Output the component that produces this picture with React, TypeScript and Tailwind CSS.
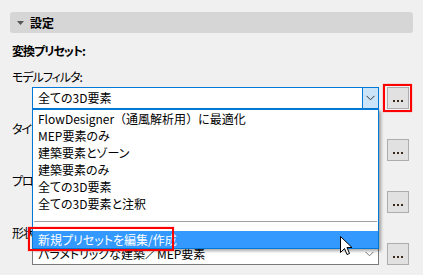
import React from "react";

function Chevron({ color }: { color: string }) {
  return (
    <svg width="9" height="6" viewBox="0 0 9 6">
      <path d="M0.5 0.8 L4.5 4.8 L8.5 0.8" fill="none" stroke={color} strokeWidth="1" />
    </svg>
  );
}

function DotsButton() {
  return (
    <div className="w-[22px] h-[22px] bg-[#e1e1e1] border border-[#adadad] flex items-end justify-center pb-[6px] gap-[2px] shrink-0">
      <span className="w-[2px] h-[2px] bg-[#3a2a1a]" />
      <span className="w-[2px] h-[2px] bg-[#3a2a1a]" />
      <span className="w-[2px] h-[2px] bg-[#3a2a1a]" />
    </div>
  );
}

function Combo({ text, focused }: { text: React.ReactNode; focused?: boolean }) {
  if (focused) {
    return (
      <div className="w-[347px] h-[22px] bg-white border border-[#0078d7] flex items-stretch">
        <div className="flex-1 pl-[5px] leading-[20px] whitespace-nowrap overflow-hidden">{text}</div>
        <div className="w-[16px] bg-[#cce4f7] border-l border-[#0078d7] flex items-center justify-center">
          <Chevron color="#333" />
        </div>
      </div>
    );
  }
  return (
    <div className="w-[347px] h-[22px] bg-white border border-[#7a7a7a] flex items-stretch">
      <div className="flex-1 pl-[5px] leading-[20px] whitespace-nowrap overflow-hidden">{text}</div>
      <div className="w-[17px] flex items-center justify-center">
        <Chevron color="#777" />
      </div>
    </div>
  );
}

function Row({ label, value, focused, first }: { label: string; value: React.ReactNode; focused?: boolean; first?: boolean }) {
  return (
    <div className={first ? "mt-[10px]" : "mt-[12px]"}>
      <div className="h-[16px] leading-[16px] whitespace-nowrap tracking-[-1px]">{label}</div>
      <div className="mt-[2px] pl-[20px] flex items-center gap-[8px]">
        <Combo text={value} focused={focused} />
        <DotsButton />
      </div>
    </div>
  );
}

export default function App() {
  const items: React.ReactNode[] = [
    <>
      FlowDesigner<span className="[font-feature-settings:normal]">（</span>通風解析用
      <span className="[font-feature-settings:normal]">）</span>に最適化
    </>,
    "MEP要素のみ",
    "建築要素とゾーン",
    "建築要素のみ",
    "全ての3D要素",
    "全ての3D要素と注釈",
  ];
  return (
    <div className="relative w-[423px] h-[275px] overflow-hidden bg-[#f0f0f0] text-[12px] text-black font-['Noto_Sans_CJK_JP','Noto_Sans_CJK_SC',sans-serif] [font-feature-settings:'palt']">
      <div className="pt-[12px] px-[10px]">
        <div className="h-[21px] rounded-[3px] bg-[#d6d6d6] flex items-center pl-[7px] gap-[6px]">
          <svg width="7" height="4" viewBox="0 0 7 4">
            <path d="M0 0 L7 0 L3.5 4 Z" fill="#555" />
          </svg>
          <span className="font-bold leading-[16px]">設定</span>
        </div>
      </div>
      <div className="pl-[12px] mt-[10px]">
        <div className="h-[16px] leading-[16px] font-bold tracking-[-1px]">変換プリセット:</div>
        <Row first label="モデルフィルタ:" value="全ての3D要素" focused />
        <Row label="タイプマッピング:" value="デフォルト" />
        <Row label="プロパティマッピング:" value="デフォルト" />
        <Row
          label="形状変換:"
          value={
            <>
              パラメトリックな建築<span className="[font-feature-settings:normal]">／</span>MEP要素
            </>
          }
        />
      </div>

      {/* dropdown list */}
      <div className="absolute left-[32px] top-[109px] w-[347px] bg-white border border-[#0078d7] shadow-[2px_2px_3px_rgba(0,0,0,0.35)]">
        {items.map((t, i) => (
          <div key={i} className="h-[17px] leading-[17px] pl-[5px] whitespace-nowrap">
            {t}
          </div>
        ))}
        <div className="h-[19px] flex items-center px-[1px]">
          <div className="h-px w-full bg-[#a0a0a0]" />
        </div>
        <div className="h-[17px] leading-[17px] pl-[5px] bg-[#3399ff] text-white whitespace-nowrap">
          新規プリセットを編集/作成
        </div>
      </div>

      {/* red highlight boxes */}
      <div className="absolute left-[28px] top-[227px] w-[146px] h-[24px] border-2 border-[#ff0000] shadow-[0_0_1px_#ff6060]" />
      <div className="absolute left-[383px] top-[84px] w-[29px] h-[28px] border-2 border-[#ff0000] shadow-[0_0_1px_#ff6060]" />

      {/* mouse cursor */}
      <svg className="absolute left-[340px] top-[236px]" width="13" height="20" viewBox="0 0 13 20">
        <path d="M0.5 0.5 L0.5 16.5 L4.5 12.5 L7 18.5 L9.5 17.5 L7 11.5 L12 11.5 Z" fill="#fff" stroke="#000" strokeWidth="1" strokeLinejoin="miter" />
      </svg>
    </div>
  );
}
